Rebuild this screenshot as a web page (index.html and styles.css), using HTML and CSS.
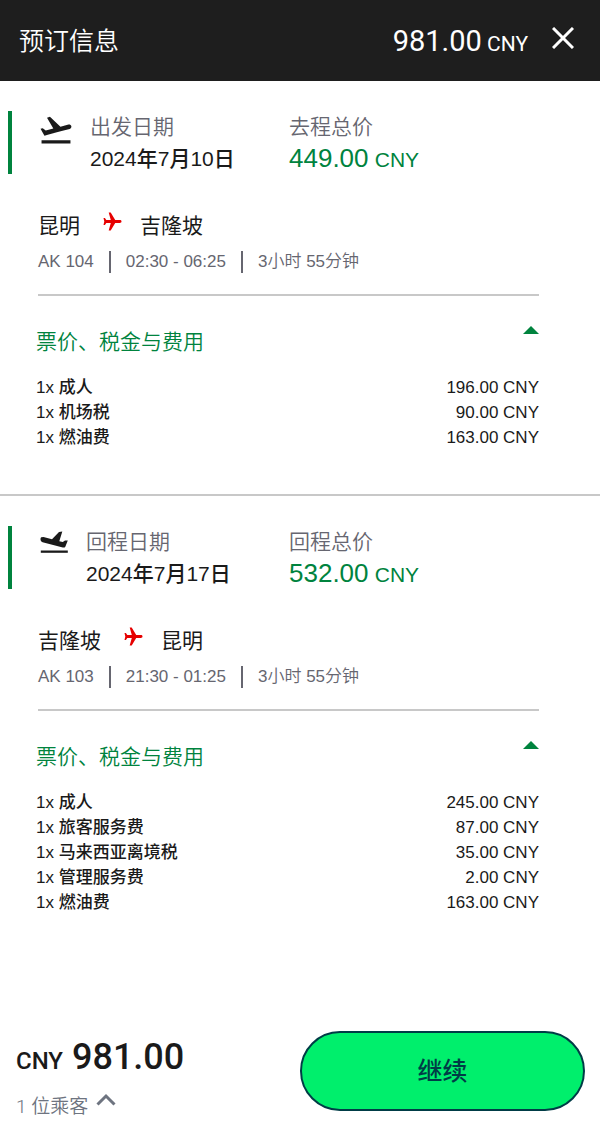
FILE: index.html
```
<!DOCTYPE html>
<html lang="zh-CN">
<head>
  <meta charset="UTF-8">
  <meta name="viewport" content="width=device-width, initial-scale=1.0">
  <title>预订信息</title>
  <link rel="stylesheet" href="styles.css">
</head>
<body>
  <header class="topbar">
    <h1>预订信息</h1>
    <div class="topbar-total">981.00 <span>CNY</span></div>
    <button class="close" type="button" aria-label="关闭">
      <svg width="22" height="22" viewBox="0 0 22 22" fill="none" stroke="currentColor" stroke-width="3"><path d="M1 1L21 21M21 1L1 21"/></svg>
    </button>
  </header>

  <main>
    <section class="leg">
      <div class="leg-head">
        <svg class="leg-icon" width="32" height="28" viewBox="1.5 3 21 18.4" fill="currentColor">
          <path d="M2.500 19h19v2h-19zm19.570-9.360c-.21-.8-1.040-1.280-1.840-1.060L14.920 10l-6.900-6.430-1.930.51 4.140 7.170-4.970 1.330-1.970-1.540-1.450.39 1.820 3.160.77 1.330 1.600-.43 5.310-1.420 4.350-1.160L21 11.490c.81-.23 1.280-1.050 1.070-1.850z"/>
        </svg>
        <div class="leg-date">
          <p class="label">出发日期</p>
          <p class="date">2024年7月10日</p>
        </div>
        <div class="leg-price">
          <p class="label">去程总价</p>
          <p class="price">449.00 <span>CNY</span></p>
        </div>
      </div>

      <div class="leg-body">
        <div class="route">
          <span>昆明</span>
          <svg class="plane" width="19" height="19" viewBox="0 0 19 19" fill="currentColor"><path d="M18.500 9.500C18.500 8.500 17.700 8.100 16.900 8.100H12.200L7.700 0.500H5.700L7.800 8.100H3.300L1.900 6.100H0.500L1.300 9.500L0.500 12.900H1.900L3.300 10.900H7.800L5.700 18.500H7.700L12.200 10.900H16.900C17.700 10.900 18.500 10.500 18.500 9.500z"/></svg>
          <span>吉隆坡</span>
        </div>
        <ul class="meta">
          <li>AK 104</li>
          <li>02:30 - 06:25</li>
          <li>3小时 55分钟</li>
        </ul>
      </div>

      <div class="fares">
        <button class="fares-toggle" type="button" aria-expanded="true">
          <span>票价、税金与费用</span>
          <svg width="16" height="8" viewBox="0 0 16 8" fill="currentColor"><path d="M0 8L8 0L16 8z"/></svg>
        </button>
        <table>
          <tr><th scope="row">1x 成人</th><td>196.00 CNY</td></tr>
          <tr><th scope="row">1x 机场税</th><td>90.00 CNY</td></tr>
          <tr><th scope="row">1x 燃油费</th><td>163.00 CNY</td></tr>
        </table>
      </div>
    </section>

    <section class="leg">
      <div class="leg-head">
        <svg class="leg-icon" width="28" height="24" viewBox="0 0 28 24" fill="currentColor">
          <path d="M0.800 19.500H27.800V21.800H0.800z"/>
          <path d="M1.200 6.300L3.500 5.900L12 8.200L19 1L22.300 0.400L19.300 10.200L22.800 11L25 9.400L27.800 9.600L25.300 15.800C24.700 16.700 23.800 16.700 22.800 16.500L2.600 11.200C1.200 10.700 0.500 9.600 0.500 8.300C0.500 7.300 0.700 6.700 1.200 6.300z"/>
        </svg>
        <div class="leg-date">
          <p class="label">回程日期</p>
          <p class="date">2024年7月17日</p>
        </div>
        <div class="leg-price">
          <p class="label">回程总价</p>
          <p class="price">532.00 <span>CNY</span></p>
        </div>
      </div>

      <div class="leg-body">
        <div class="route">
          <span>吉隆坡</span>
          <svg class="plane" width="19" height="19" viewBox="0 0 19 19" fill="currentColor"><path d="M18.500 9.500C18.500 8.500 17.700 8.100 16.900 8.100H12.200L7.700 0.500H5.700L7.800 8.100H3.300L1.900 6.100H0.500L1.300 9.500L0.500 12.900H1.900L3.300 10.900H7.800L5.700 18.500H7.700L12.200 10.900H16.900C17.700 10.900 18.500 10.500 18.500 9.500z"/></svg>
          <span>昆明</span>
        </div>
        <ul class="meta">
          <li>AK 103</li>
          <li>21:30 - 01:25</li>
          <li>3小时 55分钟</li>
        </ul>
      </div>

      <div class="fares">
        <button class="fares-toggle" type="button" aria-expanded="true">
          <span>票价、税金与费用</span>
          <svg width="16" height="8" viewBox="0 0 16 8" fill="currentColor"><path d="M0 8L8 0L16 8z"/></svg>
        </button>
        <table>
          <tr><th scope="row">1x 成人</th><td>245.00 CNY</td></tr>
          <tr><th scope="row">1x 旅客服务费</th><td>87.00 CNY</td></tr>
          <tr><th scope="row">1x 马来西亚离境税</th><td>35.00 CNY</td></tr>
          <tr><th scope="row">1x 管理服务费</th><td>2.00 CNY</td></tr>
          <tr><th scope="row">1x 燃油费</th><td>163.00 CNY</td></tr>
        </table>
      </div>
    </section>
  </main>

  <footer class="checkout">
    <div class="summary">
      <p class="total"><span>CNY</span> 981.00</p>
      <button class="guests" type="button">
        1 位乘客
        <svg width="20" height="13" viewBox="0 0 20 13" fill="none" stroke="currentColor" stroke-width="3"><path d="M1.500 11.500L10 3L18.500 11.500"/></svg>
      </button>
    </div>
    <button class="continue" type="button">继续</button>
  </footer>
</body>
</html>
```
FILE: styles.css
```
:root {
  --dark: #1e1e1e;
  --text: #1a1a1a;
  --muted: #666670;
  --green: #00833e;
  --bright: #00ef6c;
  --red: #e60000;
  --line: #c8c8c8;
}

* {
  margin: 0;
  padding: 0;
  box-sizing: border-box;
}

body {
  display: flex;
  flex-direction: column;
  min-height: 100vh;
  font-family: "Liberation Sans", "Noto Sans CJK SC", sans-serif;
  font-size: 17px;
  color: var(--text);
  background: #fff;
}

button {
  font: inherit;
  color: inherit;
  background: none;
  border: none;
  cursor: pointer;
}

svg {
  display: block;
  flex-shrink: 0;
}

/* top bar */
.topbar {
  display: flex;
  align-items: center;
  height: 81px;
  padding: 0 26px 0 19px;
  background: var(--dark);
  color: #fff;
}

.topbar h1 {
  padding-bottom: 3px;
  font-size: 25px;
  font-weight: 350;
}

.topbar-total {
  margin-left: auto;
  font-family: Roboto, sans-serif;
  font-size: 29px;
}

.topbar-total span {
  margin-left: -2px;
  font-size: 21px;
}

.close {
  margin-left: 24px;
  padding-bottom: 5px;
}

/* flight legs */
.leg {
  padding: 30px 0 44px;
}

.leg + .leg {
  border-top: 2px solid var(--line);
}

.leg-head {
  display: grid;
  grid-template-columns: auto 1fr 311px;
  margin-left: 8px;
  padding-left: 28px;
  border-left: 4px solid var(--green);
}

.leg-icon {
  margin: 5px 18px 0 0;
}

.label {
  font-size: 21px;
  font-weight: 350;
  line-height: 32px;
  color: var(--muted);
}

.date {
  font-size: 21px;
  font-weight: 500;
  line-height: 31px;
}

.price {
  font-size: 26px;
  line-height: 30px;
  color: var(--green);
}

.price span {
  margin-left: -1px;
  font-size: 21px;
  line-height: 1;
}

.leg-body {
  margin: 36px 61px 0 38px;
  padding-bottom: 21px;
  border-bottom: 2px solid var(--line);
}

.route {
  display: flex;
  font-size: 21px;
  line-height: 32px;
}

.plane {
  margin: 2px 18px 0 23px;
  color: var(--red);
}

.meta {
  display: flex;
  margin-top: 9px;
  line-height: 22px;
  list-style: none;
  font-weight: 350;
  color: var(--muted);
}

.meta li + li {
  margin-left: 15px;
  padding-left: 15px;
  border-left: 2px solid var(--muted);
}

.fares {
  margin: 30px 61px 0 36px;
}

.fares-toggle {
  display: flex;
  justify-content: space-between;
  align-items: flex-start;
  width: 100%;
  font-size: 21px;
  font-weight: 350;
  line-height: 32px;
  color: var(--green);
}

.fares table {
  width: 100%;
  margin-top: 17px;
  border-collapse: collapse;
  line-height: 25px;
}

.fares th {
  text-align: left;
  font-weight: 500;
}

.fares td {
  text-align: right;
}

/* bottom bar */
.checkout {
  display: flex;
  justify-content: space-between;
  align-items: flex-end;
  margin-top: auto;
  padding: 0 15px 3px 16px;
}

.total {
  font-family: Roboto, sans-serif;
  font-size: 36px;
  font-weight: 500;
  line-height: 48px;
}

.total span {
  font-size: 24px;
  line-height: 1;
}

.guests {
  display: flex;
  gap: 8px;
  margin-top: 12px;
  font-family: Roboto, "Noto Sans CJK SC", sans-serif;
  font-size: 19px;
  font-weight: 350;
  line-height: 28px;
  color: #6e7480;
}

.continue {
  flex: 0 1 285px;
  height: 80px;
  margin-bottom: 10px;
  padding-bottom: 4px;
  border: 2px solid #003c46;
  border-radius: 40px;
  background: var(--bright);
  color: #003c46;
  font-size: 25px;
  font-weight: 500;
}
```
